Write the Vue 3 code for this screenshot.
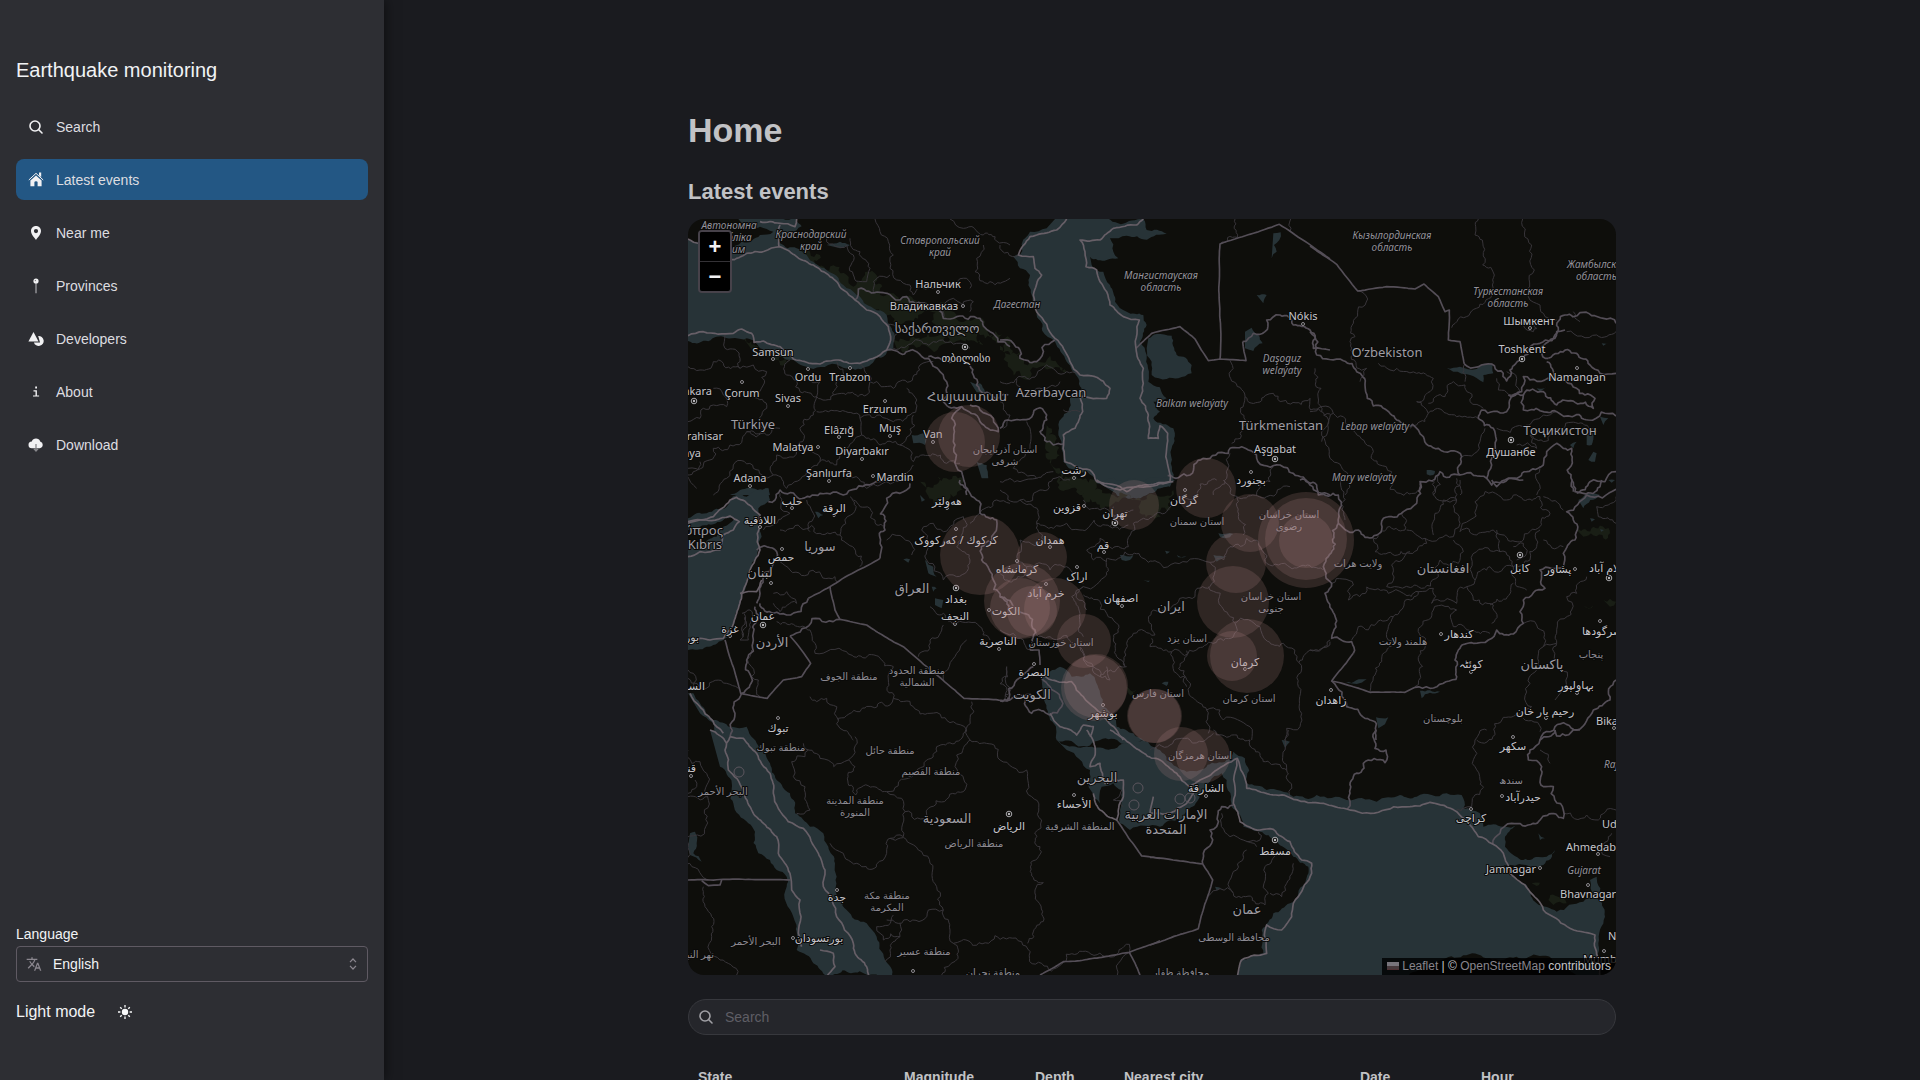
<script setup>
import { ref } from 'vue'

const active = ref('Latest events')
const language = ref('English')
const query = ref('')

const links = ['Search', 'Latest events', 'Near me', 'Provinces', 'Developers', 'About', 'Download']
const columns = [
  { name: 'State', share: 206 },
  { name: 'Magnitude', share: 131 },
  { name: 'Depth', share: 89 },
  { name: 'Nearest city', share: 236 },
  { name: 'Date', share: 121 },
  { name: 'Hour', share: 145 },
]
const total = columns.reduce((sum, c) => sum + c.share, 0)

// Deterministic noise, so coasts and borders keep the same ragged shape on each load.
const noise = (x, y) => {
  const v = Math.sin(x * 12.9898 + y * 78.233) * 43758.5453
  return v - Math.floor(v) - 0.5
}
const split = (a, b, amount) => {
  const dx = b[0] - a[0]
  const dy = b[1] - a[1]
  if (Math.hypot(dx, dy) < 13) return [b]
  const shift = noise(a[0] + b[0], a[1] + b[1]) * amount
  const mid = [(a[0] + b[0]) / 2 - dy * shift, (a[1] + b[1]) / 2 + dx * shift]
  return [...split(a, mid, amount), ...split(mid, b, amount)]
}
const trace = (line, amount) => {
  const pts = line.trim().split(' ').map((p) => p.split(',').map(Number))
  const out = [pts[0]]
  for (let i = 1; i < pts.length; i++) out.push(...split(pts[i - 1], pts[i], amount))
  return 'M' + out.map((p) => p.map((n) => n.toFixed(1)).join(' ')).join('L')
}

// Each sheet is one part of the map, drawn at three units to the pixel from its own origin.
const sheets = [
  {
    x: 680, y: 215,
    forest: ['360,110 420,120 500,180 600,240 680,245 760,270 830,300 990,370 990,420 900,360 820,350 700,330 640,320 600,290 520,250 440,190', '640,375 700,365 760,365 900,375 910,390 800,385 720,395 650,400', '190,370 230,400 330,440 300,450 220,410', '720,800 800,790 850,800 830,840 740,820'],
    water: ['175,12 350,12 365,34 330,50 290,60 300,85 350,100 380,120 440,165 490,210 530,240 580,280 620,300 635,340 645,370 640,400 610,425 560,455 490,458 400,462 340,435 290,420 240,400 200,370 130,365 24,378 24,75 60,85 150,110 185,80 240,60 280,50 240,35 190,30', '695,660 730,655 740,670 735,690 700,685', '870,500 900,505 915,530 890,532', '890,740 920,750 925,790 905,790', '150,840 200,820 265,820 270,840', '440,90 480,80 510,90 480,100'],
    country: ['525,255 535,222 600,232 680,245 740,270 790,310 830,305 900,310 930,350 990,395', '620,405 660,415 710,410 745,430 780,470 790,560 845,575 900,620 955,650 940,610 900,585 870,570', '745,425 800,440 870,450 880,480 910,535 985,540', '845,575 815,610 825,690 845,770 860,840'],
    sea: ['24,72 60,85 150,135 200,115 300,95 350,125 400,150 450,185 490,225 525,255 560,285 600,305 625,335 632,375 620,405 580,430 540,445 475,435 420,447 375,440 340,432 300,395 250,378 222,382 215,355 185,342 160,355 70,350 24,362', '240,20 300,25 345,35 350,12', '300,30 297,95'],
    region: ['585,12 600,50 625,80 640,120 630,160 650,195 690,210 700,240', '440,70 500,90 520,120 520,180 560,200 570,160 540,110 510,70', '580,235 590,190 630,180', '810,12 850,40 910,60 990,90', '910,90 890,130 885,170 930,200 990,190', '700,240 720,215 790,210 860,190 870,220', '790,310 780,280 820,250 880,260 870,290', '640,400 700,380 760,380 830,385 870,400', '24,455 60,465 100,440 130,445 180,460 220,450 260,470 250,510 220,540 260,580 250,640 200,650', '135,360 135,400 180,430 180,460', '24,620 60,610 100,570 140,575 130,540 100,520', '330,435 320,480 360,530 410,545 420,500 380,490', '470,440 480,490 460,540 410,545 400,600 360,640 360,700 290,720', '540,445 570,500 560,540 460,540', '570,500 640,520 690,500 720,450 760,440', '410,590 480,590 540,610 600,600 640,620 690,600 700,540 680,520', '540,610 545,660 600,690 660,690 690,660 700,600', '360,700 420,740 470,750 500,700 545,660', '660,690 700,740 800,745 840,745', '290,720 280,780 320,820 380,770 420,740', '24,760 70,750 100,700 150,690 200,650 260,660 300,640', '100,840 140,790 160,750 220,760 280,780', '50,820 20,780 60,740', '500,790 560,820 650,790 700,750', '620,330 660,340 640,380'],
  },
  {
    x: 1000, y: 215,
    forest: ['0,380 60,410 110,440 180,455 200,470 110,460 40,430 0,405', '140,630 165,680 160,760 220,790 280,820 240,840 170,800 135,700'],
    water: ['165,12 430,12 440,45 500,55 380,62 330,70 340,110 355,130 320,135 270,125 275,150 310,170 330,210 345,260 380,290 430,300 440,330 420,380 440,420 445,500 500,550 460,560 480,590 460,610 520,640 515,700 520,790 510,810 440,840 400,848 340,830 290,805 260,768 215,762 190,740 185,690 175,650 185,610 205,590 210,550 245,520 235,490 200,440 165,380 110,300 95,240 90,180 60,160 40,125 60,120 75,70 90,50 140,40', '445,370 470,357 515,362 530,420 575,450 575,475 535,490 500,492 455,480 455,440 440,400', '735,350 755,338 775,360 788,385 760,408 735,400', '820,55 842,52 838,75 822,90 830,110 815,130', '770,240 800,240 790,265'],
    country: ['0,375 40,385 60,430 110,440 165,375', '0,640 60,615 120,578 140,600 120,650 160,690 190,687', '728,380 760,355 795,350 800,315 840,300 880,330 930,345 940,400 990,405', '503,782 570,780 610,730 685,715 690,700 745,705 770,730 840,750 880,775 930,810 990,840'],
    straight: ['408,400 455,355 540,335 585,372 625,437 660,432 738,437 728,380', '660,432 660,87 838,28 990,132'],
    sea: ['200,12 170,45 110,60 90,65 55,120 100,125 105,160 125,180 100,240 110,290 165,370 210,440 240,480 285,485 330,520 320,550 240,545 248,590 225,640 190,660 195,740 230,755 270,765 290,800 380,830 510,800 500,700 503,655 480,632 475,670 445,670 445,600 420,550 430,460 408,400 418,315 370,305 330,270 320,230 290,165 258,155 255,110 240,75 300,75 340,40 410,30 430,12'],
    region: ['0,90 55,120', '660,87 712,67 705,12', '870,50 872,12', '690,437 735,545 725,640 695,685', '735,545 820,535 930,550 932,585 990,597', '0,500 50,490 110,480 140,450 200,470 235,478', '50,490 70,540 110,520 180,500', '0,560 30,600 10,640', '80,620 90,700 40,760 110,790 160,770', '0,800 60,800 110,790', '190,585 240,590', '820,755 810,800 770,840', '690,715 680,790 640,840', '970,600 985,640 965,680'],
  },
  {
    x: 1310, y: 215,
    water: ['410,458 450,455 500,462 545,445 550,475 520,480 520,502 480,480 430,470', '870,605 895,610 880,630', '830,660 850,655 845,690 830,690', '850,710 860,715 855,740 835,735', '350,765 375,768 370,780 350,778', '680,520 710,515 690,530', '780,690 800,680 790,700', '875,385 900,385 880,392'],
    country: ['463,447 545,447 590,498 600,465 640,430 690,385 745,345 765,300 810,293 880,310 918,325', '0,350 20,420 100,437 140,470 165,510 172,550 260,615 340,665 385,700 455,725 450,780 530,790 545,750 560,710 550,640 505,610 515,585 590,590 610,540 640,540 640,585 740,590 835,615 918,603', '710,440 725,490 640,485 635,530 595,540', '715,430 745,415 800,415 840,450 870,475 918,475', '640,540 700,530 740,570 850,580 855,550 800,520 725,490', '325,830 330,800 390,770 450,780', '530,790 545,810 600,790 650,770 700,750 710,710 740,685 785,700 790,830', '800,835 840,800 918,770', '765,345 740,350 690,410 715,430'],
    straight: ['0,93 80,148 143,228 230,215 315,222 342,207 385,245 405,290 418,285 415,375 450,380 463,447'],
    region: ['143,228 173,252 135,310 135,365 120,380 170,460 150,500', '505,12 495,60 517,75 518,150 553,180 545,240 525,262 425,338', '638,12 665,90 673,165 655,245 690,270 705,305 740,315', '205,445 240,465 320,475 370,490 360,530 320,560 355,595 410,595 440,605 505,610', '355,595 320,630 300,640', '355,565 405,545 430,500 465,510 480,560 520,580', '0,590 70,595 100,605 190,710 245,770 240,823 325,825', '70,595 35,650 60,730 105,840', '15,460 18,515 33,520 35,590', '390,770 370,840', '525,640 510,680 455,725', '560,640 640,635 700,600 740,590', '770,350 860,360 918,350', '465,447 465,500', '560,490 565,525 630,530 620,490 590,470', '640,330 670,350 680,340 660,320', '790,290 810,320', '620,690 680,700 660,660 760,640 860,650', '690,760 680,840', '440,790 450,840'],
  },
  {
    x: 680, y: 480,
    water: ['24,115 80,100 140,80 170,45 200,50 265,25 270,60 235,85 230,130 245,170 235,210 215,260 200,300 185,350 165,420 150,460 130,480 80,500 24,510', '24,640 40,640 60,670 100,720 150,742 150,780 120,765 60,700', '155,740 200,740 222,780 155,780', '735,240 760,260 770,290 745,280', '765,355 790,360 785,385 765,375', '670,238 690,238 685,248', '405,95 430,105 415,115', '720,45 735,60 725,65', '755,320 770,325 760,335'],
    land: ['24,150 60,140 165,115 130,140 110,170 60,205 24,200'],
    country: ['230,210 290,215 280,250 245,285 240,340 230,370', '265,65 285,60 300,30 420,40 500,42 580,10 700,0', '240,370 280,400 320,405 385,355', '480,418 330,468', '840,0 870,40 900,100 950,120 915,190 905,240 940,300 960,350 990,390', '225,380 220,480 200,540 185,640 165,700 150,770', '600,235 615,150 620,55 660,40 690,10'],
    straight: ['385,355 450,320 600,235', '450,320 465,390 480,418 560,435 670,500 740,560 852,655 980,663 990,655', '330,468 392,550 365,590 310,600 262,655 182,640 135,480'],
    sea: ['24,125 100,110 150,60 170,52 215,80 240,105 232,160 240,210 225,240 210,270 185,340 170,400 150,450 130,475 90,480 60,475 24,480', '24,130 60,120 150,108 178,125 160,150 130,165 120,210 60,215 24,230', '180,340 230,335 245,300', '30,640 60,680 130,760'],
    region: ['300,150 420,160 480,165 520,100 510,50', '480,165 540,260', '520,60 590,135 615,138', '620,180 695,192 695,225', '300,245 330,270 465,290 470,305', '390,450 405,490 405,520 500,515 600,535 640,560 625,600 640,655 700,680 750,700 820,725 860,750', '640,655 630,675 540,695 475,715 480,745 520,780', '790,435 750,480 715,530', '860,480 830,520 790,600', '875,665 870,720 855,755', '215,510 215,590 235,600 240,655', '24,595 140,610 175,625', '390,650 410,665 440,655 475,720', '725,150 760,130 790,155 850,110', '725,150 740,240 790,300', '280,340 320,335 350,370 300,395 280,370', '300,40 330,100 290,130 250,150', '380,60 400,100 390,155', '790,300 830,290 870,240 830,200 850,110', '870,130 950,60 990,70', '750,380 790,400 830,430 900,440 930,480', '290,425 390,450', '24,570 40,580 40,620', '186,400 210,390 215,420 205,480 180,480 186,440 192,400', '195,410 200,440 190,470', '980,560 975,660'],
  },
  {
    x: 1000, y: 480,
    forest: ['190,0 250,0 330,40 400,60 480,50 520,30 510,90 420,90 330,80 250,40', '380,620 410,630 400,645 385,640'],
    water: ['280,0 525,0 510,20 440,45 400,52 340,35', '125,600 180,560 200,570 215,590 270,580 300,640 310,680 350,740 400,760 430,781 170,781 150,720 130,650', '360,225 400,225 390,240 365,240', '640,225 680,228 650,245', '655,160 700,162 690,172 660,170', '530,225 560,230 535,232', '430,300 450,302 445,306', '485,610 505,605 500,618', '495,212 510,215 500,222'],
    country: ['0,350 40,380 70,400 105,450 90,510', '20,660 50,600 100,560', '80,650 95,700 150,705 185,680 150,620 125,595', '0,663 30,660 60,645 100,650'],
    straight: ['90,510 117,510 120,555'],
    sea: ['120,580 155,600 215,605 250,650 320,720 370,780', '150,700 180,740 230,765 250,735 280,740 270,770', '290,0 360,30 440,20 520,5'],
    region: ['322,235 355,235 445,247 630,247 690,200 740,175 785,210 800,250 870,262 975,265', '320,235 320,285 250,320 230,340 255,370 260,390', '385,200 400,130 500,95 580,60 650,0', '630,247 630,320 585,350 520,375 460,390 455,450 465,465 400,460 380,490 375,560 350,530 340,480 350,430 320,400 300,365 250,345', '625,320 665,380 705,430 700,470 640,490 590,510 515,515 450,500 455,475', '705,430 780,440 850,490 897,548 930,510 990,485', '897,548 895,620 905,700 900,740 860,745 855,780', '515,515 530,580 570,620 600,670 620,690 625,760', '560,512 560,620', '620,690 660,690 670,720 750,740 755,780', '105,450 150,470 240,500 250,540 300,590 345,575 380,560', '250,320 215,350 240,400 250,470', '0,30 60,60 120,30 210,0', '110,130 160,145 200,130 240,150 330,140 385,135', '60,60 110,130 130,180 60,180 50,250 80,260 150,270 200,260 250,310', '260,210 280,240 320,245', '260,210 300,175 385,200', '330,140 340,80', '710,50 715,110 730,165', '670,0 690,40 800,50 870,20', '0,280 40,300 80,260', '0,450 40,460 90,510', '20,560 25,660', '250,60 300,90 400,90', '240,500 280,560 330,600 320,560'],
  },
  {
    x: 1310, y: 480,
    forest: ['800,150 850,140 900,160 880,175 820,170', '820,380 850,375 840,385', '880,360 918,365 900,380'],
    water: ['805,60 850,40 870,45 820,85', '108,608 170,598 140,612', '330,632 390,635 335,655', '198,712 235,712 205,745', '840,115 855,118 845,125', '895,0 915,0 905,8', '870,148 882,150 874,155'],
    country: ['-30,0 20,15 25,45 85,45 85,130 55,230 40,260 65,310 45,340 65,475 125,485 130,520', '65,603 110,680 165,715 195,725 198,780', '85,130 145,150 165,172 215,150 220,115 280,95 320,70 330,10', '315,622 360,625 438,598 435,540 445,510 490,490 535,480 560,450 610,462 640,430 640,360 705,325 690,270 760,260 760,220 795,180 790,120 770,95 830,45 918,28', '545,0 560,20 640,0', '785,0 795,35 820,40 870,20 875,0', '918,600 900,660 850,690 800,750 735,740 700,760 690,780'],
    straight: ['130,520 65,603 180,637 285,637 315,622'],
    region: ['280,95 285,150 190,175 195,215 300,220 350,190 345,175 290,150', '345,175 430,170 450,130 440,60 400,60 375,100 370,165', '430,180 460,215 445,250 390,240 385,290 325,320 230,320 245,255 300,215', '450,155 550,150 640,180 690,140 720,100 690,50 640,60 580,60 510,50 480,120 450,155', '560,150 570,215 500,215 495,300', '570,215 610,260 660,240 680,200 690,150', '610,260 610,290 650,330', '65,310 130,315 115,360 235,340 325,335 370,325 365,370 440,370 470,320 500,290 540,260 610,260', '325,335 250,410', '250,410 235,440 245,500 215,545 190,590 180,635', '125,480 145,440 200,430 250,410', '315,620 325,540 332,440 370,390 440,390 430,440 540,460', '470,320 490,360 550,375 545,430', '540,375 610,310', '640,430 680,435 700,500 740,490 740,460 785,390 770,350 800,340 830,290', '740,490 735,660', '700,500 690,560 660,610 665,680 640,700 580,712 500,780', '640,715 690,755', '918,50 860,80 865,110 918,130', '90,0 105,120', '370,0 375,50 440,60', '450,0 440,60', '610,200 640,190 650,220 620,240', '700,50 760,90', '700,180 760,200', '0,510 60,480'],
  },
  {
    x: 680, y: 730,
    water: ['90,0 180,0 230,40 270,100 290,150 330,190 345,250 390,290 430,310 445,350 465,400 465,480 500,540 560,580 590,620 615,690 638,740 440,740 400,700 350,660 340,560 320,470 320,440 270,390 235,370 225,305 205,280 160,220 120,110', '30,310 45,305 50,340 40,370 65,395 30,375 24,350'],
    country: [],
    straight: ['24,450 330,450', '65,452 85,467 120,465 125,450', '1080,735 1150,695 1265,682 1348,667 1440,632', '1348,667 1380,735', '1310,270 1385,378 1440,385'],
    sea: ['150,20 135,60 145,120 190,180 215,240 290,320 295,370 330,430 335,480 360,510 355,610 365,650', '150,20 190,25 230,70 270,130 280,190 325,275 370,295 415,370 435,420 430,470 470,560 520,640 525,670 560,710 568,740', '420,660 460,670 465,710 440,740', '90,0 140,40'],
    region: ['83,200 80,448', '24,200 83,200', '70,470 75,530 95,560 95,620 120,690 170,735', '24,190 50,170 45,150', '24,60 35,100 60,95 80,130 83,200', '385,60 375,80 335,95 340,140 375,170 390,240 350,250', '370,40 420,85 505,90 525,20', '505,90 525,110 527,195', '450,340 490,370 545,410 620,370 630,325 670,320 675,245 665,205 620,185 527,195', '620,185 740,90 770,50 860,0 870,30 830,75 832,120 855,180 745,235 740,270 675,245', '870,30 960,90 1040,120 1055,200 1085,270 1080,350 1062,450 1090,458 1065,480 1088,545 1043,640', '630,325 690,340 750,400 770,470 790,540', '620,570 690,575 745,540 790,540 810,600 820,640 870,635 880,648', '880,646 1348,643', '1348,643 1348,667 1315,700 1312,735', '640,555 590,590 610,630 660,620 630,660 615,695', '660,620 660,580', '820,640 835,660 785,735'],
  },
  {
    x: 1150, y: 730,
    forest: ['1195,510 1240,505 1250,520 1210,525', '1145,460 1170,458 1160,468'],
    water: ['-280,30 -20,30 30,60 80,110 110,125 150,120 200,100 250,65 285,85 290,160 350,180 430,200 500,195 590,210 680,215 750,195 800,200 890,190 935,195 940,235 990,250 1000,290 1060,290 1105,285 1065,320 1065,350 1090,375 1140,390 1190,380 1215,360 1180,405 1075,405 1060,405 1090,440 1160,520 1220,545 1300,515 1325,500 1320,450 1340,440 1345,510 1365,560 1345,640 1350,740 262,740 270,690 340,670 335,600 370,550 420,520 465,460 475,410 430,380 380,330 330,305 280,290 245,230 230,150 215,130 150,190 90,270 30,290 -60,300 -90,280 -90,240 -85,180 -110,160 -145,170 -150,220 -170,200 -180,120 -250,60', '1165,310 1185,325 1170,330', '195,470 215,475 200,482', '395,30 420,35 405,55'],
    country: ['250,225 215,230 200,290 180,300 185,340 160,370 158,402', '592,237 600,190 610,140 640,100 705,98 708,60 675,55 678,0', '1028,342 1050,310 1085,280 1150,280 1240,265 1240,240 1210,170 1180,170 1175,110 1135,90 1140,60 1170,30 1215,0', '1215,0 1220,18 1290,0'],
    straight: ['158,402 0,382', '158,402 188,450 145,596 0,645'],
    sea: ['-190,0 -165,50 -180,110 -150,100 -135,160 -80,150 -80,200 -100,270 -150,240 -170,190', '-120,0 -60,40 30,90 80,130 120,170 150,150 200,120 245,95 262,85 290,175 430,208 520,220 590,237 780,230 840,217 920,245 960,285 985,320 1028,342 1060,370 1080,430 1180,540 1335,615 1343,680 1350,740', '262,85 255,170 250,220 270,275 330,300 370,298 420,335 455,390 485,400 485,430 445,500 430,520 425,560 395,600 350,585 345,625 350,670 275,690 262,740', '10,200 0,250 60,250 110,220 140,180'],
    region: ['215,250 240,320 320,350', '290,360 260,420 250,490 345,525 355,490 345,410 380,370', '175,498 250,488', '190,0 300,30 330,70 410,120 430,205', '415,0 405,60 410,120', '1010,0 975,30 975,110 990,150 965,230 920,240', '1240,250 1310,255 1345,270 1398,240', '360,490 395,500 410,460 430,400', '325,305 330,330 290,335', '0,60 60,45 120,30 190,10', '-85,180 -110,210 -80,230', '1200,100 1170,60', '1385,310 1350,350 1380,380'],
  },
]
// Every border carries its class and how ragged it is.
for (const s of sheets) {
  s.line = [
    ...s.region.map((d) => ['region', d, 0.55]),
    ...s.country.map((d) => ['country', d, 0.45]),
    ...(s.straight || []).map((d) => ['country', d, 0.04]),
    ...(s.sea || []).map((d) => ['sea', d, 0.18]),
  ]
}
const islets = [[739, 772, 5], [1180, 799, 5], [1190, 798, 5], [1138, 788, 5], [1134, 805, 5]]

const quakes = [
  [955, 442, 30], [969, 436, 31], [980, 555, 40], [1134, 505, 25], [1206, 488, 30], [1250, 523, 29],
  [1306, 540, 48], [1306, 539, 41], [1306, 541, 27], [1236, 563, 30], [1233, 602, 36], [1247, 656, 37],
  [1232, 656, 25], [1042, 557, 25], [1022, 601, 38], [1055, 609, 31], [1032, 611, 25], [1020, 608, 30],
  [1084, 641, 27], [1096, 686, 32], [1094, 688, 33], [1154, 716, 27], [1155, 716, 27], [1181, 754, 27], [1203, 756, 27],
]

// text, x, y of the middle, side the text hangs from
const cities = [
  ['Нальчик', 938, 284], ['Владикавказ', 924, 306], ['თბილისი', 966, 358], ['Samsun', 773, 352], ['Ordu', 808, 377],
  ['Trabzon', 850, 377], ['Çorum', 742, 393], ['Ankara', 712, 391, 'end'], ['Sivas', 788, 398], ['Erzurum', 885, 409],
  ['Elâzığ', 839, 430], ['Muş', 890, 428], ['Van', 933, 434], ['Afyonkarahisar', 723, 436, 'end'], ['Konya', 701, 453, 'end'],
  ['Malatya', 793, 447], ['Diyarbakır', 862, 451], ['Şanlıurfa', 829, 473], ['Mardin', 895, 477], ['Adana', 750, 478],
  ['Nókis', 1303, 316], ['Aşgabat', 1275, 449], ['رشت', 1074, 470], ['بجنورد', 1251, 480], ['Шымкент', 1529, 321],
  ['Toshkent', 1522, 349], ['Namangan', 1577, 377], ['Душанбе', 1511, 452], ['حلب', 792, 501], ['الرقة', 834, 508],
  ['هەولێر', 947, 501], ['اللاذقية', 760, 520], ['حمص', 781, 557], ['كركوك / کەرکووک', 956, 540], ['بغداد', 956, 599],
  ['عمان', 763, 616], ['النجف', 955, 616], ['غزة', 730, 629], ['بورسعيد', 699, 637, 'end'], ['الناصرية', 998, 641],
  ['السويس', 705, 686, 'end'], ['تبوك', 778, 728], ['الكوت', 1006, 611], ['گرگان', 1184, 500], ['قزوین', 1067, 507],
  ['تهران', 1115, 513], ['همدان', 1050, 540], ['قم', 1103, 545], ['كرمانشاه', 1017, 569], ['اراک', 1077, 576],
  ['خرم آباد', 1046, 593], ['اصفهان', 1121, 598], ['البصرة', 1034, 672], ['کرمان', 1245, 662], ['بوشهر', 1103, 713],
  ['زاهدان', 1331, 700], ['کابل', 1520, 568], ['پشاور', 1558, 569], ['اسلام آباد', 1589, 568, 'start'], ['کندهار', 1459, 634],
  ['سرگودها', 1582, 631, 'start'], ['کوئٹہ', 1471, 664], ['بہاولپور', 1576, 685], ['رحیم یار خان', 1545, 711],
  ['Bikaner', 1596, 721, 'start'], ['قنا', 696, 768, 'end'], ['الرياض', 1009, 826], ['الأحساء', 1074, 804], ['جدة', 837, 897],
  ['بورتسودان', 819, 938], ['الشارقة', 1206, 788], ['سكهر', 1513, 746], ['حيدرآباد', 1523, 797], ['كراچی', 1471, 818],
  ['Udaipur', 1602, 824, 'start'], ['Ahmedabad', 1566, 847, 'start'], ['Jamnagar', 1511, 869], ['Bhavnagar', 1560, 894, 'start'],
  ['مسقط', 1275, 851], ['Mumbai', 1583, 959, 'start'], ['Nashik', 1608, 936, 'start'],
]
const countries = [
  ['საქართველო', 937, 329], ['Հայաստան', 967, 397], ['Türkiye', 753, 425], ['Azərbaycan', 1051, 393], ['Türkmenistan', 1281, 426],
  ['O‘zbekiston', 1387, 353], ['Тоҷикистон', 1560, 431], ['Κύπρος', 723, 531, 'end'], ['Kıbrıs', 722, 545, 'end'], ['سوريا', 820, 547],
  ['لبنان', 760, 573], ['العراق', 912, 589], ['الأردن', 772, 643], ['ایران', 1171, 607], ['الكويت', 1032, 695],
  ['افغانستان', 1443, 569], ['پاکستان', 1542, 665], ['السعودية', 947, 819], ['البحرين', 1097, 778], ['الإمارات العربية', 1166, 815],
  ['المتحدة', 1166, 830], ['عمان', 1247, 910],
]
const provinces = [
  ['Автономна', 729, 225], ['Республіка', 727, 237], ['Крим', 733, 249], ['Краснодарский', 811, 234], ['край', 811, 246],
  ['Ставропольский', 940, 240], ['край', 940, 252], ['Дагестан', 1017, 304], ['Мангистауская', 1161, 275], ['область', 1161, 287],
  ['Daşoguz', 1282, 358], ['welaýaty', 1282, 370], ['Balkan welaýaty', 1192, 403], ['Кызылординская', 1392, 235], ['область', 1392, 247],
  ['Жамбылская', 1567, 264, 'start'], ['область', 1576, 276, 'start'], ['Туркестанская', 1508, 291], ['область', 1508, 303],
  ['Lebap welaýaty', 1375, 426], ['Mary welaýaty', 1364, 477], ['Rajasthan', 1604, 764, 'start'], ['Gujarat', 1584, 870],
]
const areas = [
  ['استان آذربایجان', 1005, 449], ['شرقی', 1005, 461], ['منطقة الجوف', 849, 676], ['منطقة الحدود', 917, 670], ['الشمالية', 917, 682],
  ['استان سمنان', 1197, 521], ['استان خراسان', 1289, 514], ['رضوی', 1289, 526], ['استان خراسان', 1271, 596], ['جنوبی', 1271, 608],
  ['استان یزد', 1187, 638], ['استان خوزستان', 1061, 642], ['استان فارس', 1158, 693], ['استان کرمان', 1249, 698], ['ولایت هرات', 1358, 563],
  ['پنجاب', 1591, 654], ['هلمند ولایت', 1403, 641], ['بلوچستان', 1443, 718], ['منطقة تبوك', 781, 747], ['منطقة حائل', 890, 750],
  ['منطقة القصيم', 931, 771], ['البحر الأحمر', 723, 791], ['منطقة المدينة', 855, 800], ['المنورة', 855, 812], ['منطقة الرياض', 974, 843],
  ['المنطقة الشرقية', 1080, 826], ['منطقة مكة', 887, 895], ['المكرمة', 887, 907], ['البحر الأحمر', 756, 941], ['نهر النيل', 714, 954, 'end'],
  ['منطقة عسير', 924, 951], ['منطقة نجران', 993, 972], ['استان هرمزگان', 1200, 755], ['سندھ', 1511, 780], ['محافظة الوسطى', 1234, 937],
  ['محافظة ظفار', 1181, 972],
]
const labels = [
  ...areas.map((l) => ['area', ...l]),
  ...provinces.map((l) => ['province', ...l]),
  ...countries.map((l) => ['nation', ...l]),
  ...cities.map((l) => ['city', ...l]),
]
const dots = [
  [938, 292], [963, 306], [773, 359], [808, 369], [850, 368], [742, 382], [788, 406], [885, 401], [839, 437], [890, 436], [933, 442],
  [818, 447], [862, 459], [829, 481], [873, 476], [750, 486], [1303, 324], [1074, 478], [1251, 472], [1530, 328], [1577, 368],
  [792, 508], [834, 515], [947, 508], [760, 527], [782, 549], [956, 529], [771, 583], [955, 624], [730, 636], [999, 649], [778, 718],
  [989, 610], [1185, 490], [1084, 506], [1050, 547], [1104, 552], [1017, 561], [1077, 567], [1046, 584], [1122, 606], [1034, 664],
  [1245, 669], [1103, 705], [1331, 690], [1575, 569], [1441, 634], [1600, 621], [1471, 672], [1577, 693], [1546, 718], [1614, 728],
  [691, 776], [1074, 795], [837, 890], [793, 938], [913, 971], [1206, 796], [1513, 737], [1502, 796], [1471, 809], [1598, 854],
  [1540, 868], [1588, 885], [1604, 951],
]
const capitals = [[965, 347], [694, 401], [1275, 459], [1522, 359], [1511, 440], [956, 588], [763, 625], [1115, 523], [1520, 555], [1609, 578], [1009, 814], [1275, 840]]
</script>

<template>
  <div class="shell">
    <aside class="sidebar">
      <div class="brand">Earthquake monitoring</div>
      <nav class="nav">
        <a v-for="link in links" :key="link" href="#" class="nav-link" :class="{ active: link === active }" @click.prevent="active = link">
          <svg class="icon" viewBox="0 0 16 16" aria-hidden="true">
            <g v-if="link === 'Search'" fill="none" stroke="currentColor" stroke-width="1.6" stroke-linecap="round">
              <circle cx="7" cy="7" r="5" /><path d="M10.8 10.8 14 14" />
            </g>
            <g v-else-if="link === 'Latest events'">
              <path d="M8 3.4 2.4 8.6V14.2H6.4V10.2Q6.4 9.2 8 9.2 9.6 9.2 9.6 10.2V14.2H13.6V8.6Z" fill="currentColor" />
              <path d="M.8 8 8 1.3 15.2 8" fill="none" stroke="currentColor" stroke-width="1" />
              <path d="M11 .6h2.2v4.6L11 3.2z" fill="currentColor" />
            </g>
            <path v-else-if="link === 'Near me'" fill-rule="evenodd" fill="currentColor" d="M8 1C5 1 3 3.2 3 6c0 3.500 3.500 6.500 5 9 1.500-2.500 5-5.500 5-9 0-2.800-2-5-5-5Zm0 3a2 2 0 1 1 0 4.200A2 2 0 0 1 8 4Z" />
            <g v-else-if="link === 'Provinces'">
              <path d="M8 4v11.2" stroke="#98989c" stroke-width="1.4" />
              <circle cx="8" cy="3" r="2.6" fill="currentColor" /><circle cx="7.4" cy="2.6" r=".7" fill="#77777b" />
            </g>
            <g v-else-if="link === 'Developers'" fill="currentColor">
              <path d="M5.5 1 10.5 10.4H.4Z" /><path d="M10.2 5a5 5 0 1 1-4.3 6.4H12Z" />
            </g>
            <path v-else-if="link === 'About'" d="M7.2 2.6h1.800v1.800H7.2zM5.500 6.200h3.400v5.200h2.200v1.200H5v-1.200h2.500V7.400h-2z" fill="currentColor" />
            <g v-else>
              <path d="M4 11.200a3.400 3.400 0 0 1-.2-6.800A4.500 4.500 0 0 1 12.200 4.400a3.500 3.500 0 0 1-.2 6.800Z" fill="currentColor" />
              <path d="M8 7v6M5.800 11.600 8 14l2.200-2.400" fill="none" stroke="#88888c" stroke-width="1.3" />
            </g>
          </svg>
          <span>{{ link }}</span>
        </a>
      </nav>
      <div class="settings">
        <label class="language-label" for="language">Language</label>
        <div class="select-box">
          <svg class="icon translate" viewBox="0 0 24 24" aria-hidden="true">
            <path fill="currentColor" d="m12.870 15.070-2.540-2.510.03-.03A17.520 17.520 0 0 0 14.070 6H17V4h-7V2H8v2H1v2h11.170C11.500 7.920 10.440 9.750 9 11.350 8.070 10.320 7.300 9.190 6.690 8h-2c.73 1.630 1.730 3.170 2.980 4.560l-5.090 5.020L4 19l5-5 3.110 3.110zM18.500 10h-2L12 22h2l1.120-3h4.750L21 22h2zm-2.620 7 1.620-4.330L19.120 17z" />
          </svg>
          <select id="language" v-model="language">
            <option>English</option>
          </select>
          <svg class="icon chevrons" viewBox="0 0 16 16" aria-hidden="true">
            <path d="M5 6.200 8 3l3 3.200M5 9.800 8 13l3-3.200" fill="none" stroke="currentColor" stroke-width="1.2" />
          </svg>
        </div>
        <div class="mode">
          <span id="mode-label">Light mode</span>
          <button type="button" class="mode-button" aria-labelledby="mode-label">
            <svg class="icon" viewBox="0 0 16 16" aria-hidden="true">
              <circle cx="8" cy="8" r="3.200" fill="currentColor" />
              <path d="M8 1v2.400M8 12.600V15M1 8h2.400M12.600 8H15M3.200 3.200l1.500 1.500M11.300 11.300l1.500 1.500M3.200 12.800l1.500-1.500M11.300 4.700l1.500-1.500" stroke="currentColor" stroke-width="1.3" />
            </svg>
          </button>
        </div>
      </div>
    </aside>

    <main class="main">
      <div class="content">
        <h1>Home</h1>
        <h2>Latest events</h2>
        <section class="map" aria-label="Map of the latest events">
          <svg class="canvas" viewBox="688 219 928 756" preserveAspectRatio="xMidYMid slice">
            <g v-for="s in sheets" :key="`f${s.x}-${s.y}`" :transform="`translate(${s.x} ${s.y}) scale(.33333)`">
              <path v-for="d in s.forest || []" :key="d" class="forest" :d="trace(d, 0.9)" />
              <path v-for="d in s.water" :key="d" class="water" :d="trace(d, 0.3)" />
              <path v-for="d in s.land || []" :key="d" class="land" :d="trace(d, 0.3)" />
            </g>
            <g v-for="s in sheets" :key="`l${s.x}-${s.y}`" :transform="`translate(${s.x} ${s.y}) scale(.33333)`">
              <path v-for="l in s.line" :key="l[1]" :class="l[0]" :d="trace(l[1], l[2])" />
            </g>
            <circle v-for="r in islets" :key="r.join()" class="ring" :cx="r[0]" :cy="r[1]" :r="r[2]" />
            <circle v-for="d in dots" :key="d.join()" class="dot" :cx="d[0]" :cy="d[1]" r="1.5" />
            <g v-for="c in capitals" :key="c.join()">
              <circle class="dot capital" :cx="c[0]" :cy="c[1]" r="2.8" />
              <circle class="core" :cx="c[0]" :cy="c[1]" r="1.2" />
            </g>
            <text v-for="(l, i) in labels" :key="i" :class="l[0]" :x="l[2]" :y="l[3] + 4" :text-anchor="l[4] || 'middle'">{{ l[1] }}</text>
            <circle v-for="(q, i) in quakes" :key="`q${i}`" class="quake" :cx="q[0]" :cy="q[1]" :r="q[2]" />
          </svg>
          <div class="zoom">
            <button type="button" aria-label="Zoom in"><span>+</span></button>
            <button type="button" aria-label="Zoom out"><span>−</span></button>
          </div>
          <div class="credit">
            <svg class="flag" viewBox="0 0 12 8" aria-hidden="true">
              <path fill="#77747b" d="M0 0h12v4H0z" /><path fill="#46393c" d="M0 4h12v3H0z" /><path fill="#4e3033" d="M0 7h12v1H0z" />
            </svg>
            <a href="#">Leaflet</a> | © <a href="#">OpenStreetMap</a> contributors
          </div>
        </section>

        <div class="search">
          <svg class="icon" viewBox="0 0 16 16" aria-hidden="true">
            <g fill="none" stroke="currentColor" stroke-width="1.6" stroke-linecap="round">
              <circle cx="7" cy="7" r="5" /><path d="M10.8 10.8 14 14" />
            </g>
          </svg>
          <input v-model="query" type="text" placeholder="Search" aria-label="Search" />
        </div>

        <table class="events">
          <colgroup>
            <col v-for="c in columns" :key="c.name" :style="{ width: (c.share / total) * 100 + '%' }" />
          </colgroup>
          <thead>
            <tr>
              <th v-for="c in columns" :key="c.name" scope="col">{{ c.name }}</th>
            </tr>
          </thead>
        </table>
      </div>
    </main>
  </div>
</template>

<style>
body {
  margin: 0;
  background: #1a1b1e;
}
</style>

<style scoped>
.shell {
  display: flex;
  height: 100vh;
  overflow: hidden;
  background: #1a1b1f;
  color: #c1c2c5;
  font-family: "Liberation Sans", Arial, sans-serif;
  font-size: 14px;
}
.shell * {
  box-sizing: border-box;
}
.icon {
  width: 16px;
  height: 16px;
  flex: none;
}
.sidebar {
  display: flex;
  flex-direction: column;
  flex: none;
  width: 20%;
  padding: 56px 16px 54px;
  background: #2d2e33;
  color: #f1f3f5;
  box-shadow: 1px 0 12px rgba(0, 0, 0, 0.5);
}
.brand {
  font-size: 20px;
  line-height: 28px;
}
.nav {
  display: flex;
  flex-direction: column;
  gap: 12px;
  margin-top: 22px;
}
.nav-link {
  display: flex;
  align-items: center;
  gap: 12px;
  height: 41px;
  padding: 0 12px;
  border-radius: 8px;
  color: #dddde0;
  text-decoration: none;
}
.nav-link .icon {
  color: #f1f1f3;
}
.nav-link.active {
  background: #235784;
}
.settings {
  margin-top: auto;
}
.language-label {
  display: block;
  line-height: 24px;
}
.select-box {
  position: relative;
}
.select-box .icon {
  position: absolute;
  top: 10px;
  color: #8b878f;
  pointer-events: none;
}
.select-box .translate {
  left: 10px;
}
.select-box .chevrons {
  right: 7px;
}
select {
  display: block;
  width: 100%;
  height: 36px;
  padding: 0 36px;
  border: 1px solid #5f5a63;
  border-radius: 4px;
  appearance: none;
  background: transparent;
  color: #f1f3f5;
  font: inherit;
}
.mode {
  display: flex;
  align-items: center;
  gap: 16px;
  margin-top: 16px;
  font-size: 16px;
}
.mode-button {
  display: flex;
  padding: 6px;
  border: 0;
  background: none;
  color: #f8f9fa;
}
.main {
  flex: 1;
  min-width: 0;
  overflow-y: auto;
  scrollbar-width: none;
}
.content {
  max-width: 960px;
  margin: 0 auto;
  padding: 108px 16px 16px;
}
h1 {
  margin: 0 0 24px;
  font-size: 34px;
  line-height: 44px;
}
h2 {
  margin: 0 0 11px;
  font-size: 22px;
  line-height: 32px;
}
.map {
  position: relative;
  height: 70vh;
  overflow: hidden;
  border-radius: 16px;
  background: #0e0e0b;
}
.canvas {
  display: block;
  width: 100%;
  height: 100%;
}
.forest {
  fill: #191e15;
}
.water {
  fill: #273337;
}
.land {
  fill: #0e0e0b;
}
.region,
.country,
.sea {
  fill: none;
  stroke-linejoin: round;
}
.region {
  stroke: #38353a;
  stroke-width: 3px;
}
.country {
  stroke: #544e57;
  stroke-width: 5px;
}
.sea {
  stroke: #675f67;
  stroke-width: 5px;
}
.ring {
  fill: none;
  stroke: #5c565e;
  stroke-width: 1px;
}
.dot {
  fill: #0e0e0b;
  stroke: #8d8b91;
  stroke-width: 1px;
}
.capital {
  stroke: #a9a8ac;
}
.core {
  fill: #b9b8bc;
}
text {
  font-family: "Noto Sans", "DejaVu Sans", sans-serif;
  font-size: 11px;
  fill: #c6c5c9;
  stroke: #0a0a09;
  stroke-width: 2px;
  stroke-linejoin: round;
  paint-order: stroke;
}
.nation {
  font-size: 13px;
  fill: #9f9da3;
}
.province {
  font-size: 10px;
  font-style: italic;
  fill: #94929a;
}
.area {
  font-size: 10px;
  fill: #8d8a92;
}
.quake {
  fill: #b48888;
  fill-opacity: 0.2;
}
.zoom {
  position: absolute;
  top: 11px;
  left: 10px;
  width: 34px;
  overflow: hidden;
  border: 2px solid #47424a;
  border-radius: 4px;
}
.zoom button {
  display: flex;
  align-items: center;
  justify-content: center;
  width: 100%;
  height: 29px;
  padding: 0;
  border: 0;
  background: #000;
  color: #f1f1f3;
  font-family: "Liberation Sans", Arial, sans-serif;
  font-size: 22px;
  font-weight: 700;
  line-height: 30px;
}
.zoom button + button {
  height: 30px;
  border-top: 1px solid #343236;
}
.credit {
  position: absolute;
  right: 0;
  bottom: 0;
  padding: 0 5px;
  background: rgba(0, 0, 0, 0.8);
  color: #c4c4c8;
  font-size: 12px;
  line-height: 17px;
}
.credit a {
  color: #88858c;
  text-decoration: none;
}
.flag {
  width: 12px;
  height: 8px;
  margin-right: 3px;
}
.search {
  position: relative;
  margin-top: 24px;
}
.search .icon {
  position: absolute;
  top: 10px;
  left: 10px;
  color: #a0a0a5;
}
.search input {
  display: block;
  width: 100%;
  height: 36px;
  padding: 0 36px;
  border: 1px solid #37383d;
  border-radius: 18px;
  outline: none;
  background: #25262b;
  color: #c1c2c5;
  font: inherit;
}
.search input::placeholder {
  color: #5f5e65;
  opacity: 1;
}
.events {
  width: 100%;
  margin-top: 24px;
  border-collapse: collapse;
  table-layout: fixed;
}
.events th {
  padding: 7px 10px;
  border-bottom: 1px solid #37383d;
  font-weight: 700;
  line-height: 22px;
  text-align: left;
}
</style>
